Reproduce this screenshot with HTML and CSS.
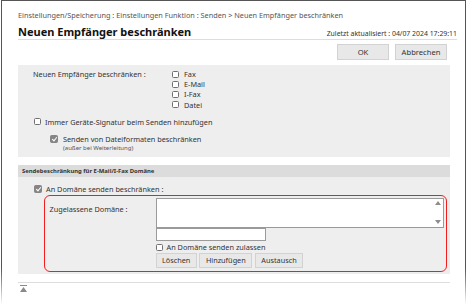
FILE: index.html
```html
<!DOCTYPE html>
<html lang="de">

<head>
    <meta charset="UTF-8">
    <title>Neuen Empfänger beschränken</title>
    <link rel="stylesheet" href="styles.css">
</head>

<body>
    <div class="window">
        <div class="crumb">Einstellungen/Speicherung : Einstellungen Funktion : Senden &gt; Neuen Empfänger beschränken</div>
        <div class="titlebar">
            <h1>Neuen Empfänger beschränken</h1>
            <span class="updated">Zuletzt aktualisiert : 04/07 2024 17:29:11</span>
        </div>
        <div class="actions">
            <button class="btn ok">OK</button>
            <button class="btn">Abbrechen</button>
        </div>

        <div class="panel">
            <div class="dest">
                <span class="dest-label">Neuen Empfänger beschränken :</span>
                <div class="opts">
                    <label class="check"><span class="box"></span>Fax</label>
                    <label class="check"><span class="box"></span>E-Mail</label>
                    <label class="check"><span class="box"></span>I-Fax</label>
                    <label class="check"><span class="box"></span>Datei</label>
                </div>
            </div>
            <label class="check sig"><span class="box"></span>Immer Geräte-Signatur beim Senden hinzufügen</label>
            <div class="fmt">
                <label class="check"><span class="box on"></span>Senden von Dateiformaten beschränken</label>
                <div class="note">(außer bei Weiterleitung)</div>
            </div>
        </div>

        <div class="section">
            <div class="section-head">Sendebeschränkung für E-Mail/I-Fax Domäne</div>
            <div class="section-body">
                <label class="check limit"><span class="box on"></span>An Domäne senden beschränken :</label>
                <div class="domain">
                    <span class="domain-label">Zugelassene Domäne :</span>
                    <div class="controls">
                        <div class="list">
                            <div class="scroll"><span class="up"></span><span class="down"></span></div>
                        </div>
                        <div class="entry"></div>
                        <label class="check allow"><span class="box"></span>An Domäne senden zulassen</label>
                        <div class="btns">
                            <button class="btn small">Löschen</button>
                            <button class="btn small">Hinzufügen</button>
                            <button class="btn small">Austausch</button>
                        </div>
                    </div>
                </div>
            </div>
        </div>

        <div class="footer">
            <svg width="7" height="7" viewBox="0 0 7 7">
                <rect x="0" y="0" width="7" height="1" fill="#8a8a8a" />
                <polygon points="3.5,2 7,7 0,7" fill="#8a8a8a" />
            </svg>
        </div>
    </div>
</body>

</html>
```

FILE: styles.css
```css
* {
    margin: 0;
    padding: 0;
    box-sizing: border-box;
}

body {
    background: #fff;
    font-family: "Noto Sans", "Open Sans", sans-serif;
    font-size: 7.3px;
    color: #333;
}

.window {
    width: 465px;
    height: 304px;
    margin-left: 1px;
    border: 1px solid #555;
    border-bottom: 0;
    border-image: linear-gradient(to bottom, #555 88%, #fff) 1;
    padding: 9px 8px 0 16px;
}

.crumb {
    line-height: 10px;
    color: #555;
    font-size: 7.3px;
}

.titlebar {
    display: flex;
    align-items: baseline;
    justify-content: space-between;
    margin-top: 5px;
    height: 15px;
    border-bottom: 1px solid #ddd;
}

.titlebar h1 {
    font-size: 11px;
    line-height: 14px;
    color: #111;
}

.updated {
    font-size: 6.9px;
    color: #333;
}

.actions {
    display: flex;
    justify-content: flex-end;
    gap: 6px;
    margin-top: 4px;
    margin-right: 10px;
}

.btn {
    height: 16px;
    width: 52px;
    background: #e8e8e8;
    border: 1px solid #d2d2d2;
    font-family: inherit;
    font-size: 7.6px;
    color: #333;
}

.panel {
    margin-top: 5px;
    margin-right: 7px;
    height: 92px;
    background: #eee;
    padding: 4px 0 0 15px;
}

.dest {
    display: flex;
}

.dest-label {
    width: 139px;
    line-height: 10.2px;
}

.opts {
    display: flex;
    flex-direction: column;
}

.check {
    display: flex;
    align-items: center;
    gap: 5px;
    line-height: 10.2px;
}

.box {
    width: 7px;
    height: 7px;
    border: 1px solid #6f6f6f;
    border-radius: 1.5px;
    background: #fff;
    position: relative;
}

.box.on {
    width: 8px;
    height: 8px;
    background: #858585;
    border-color: #858585;
}

.box.on::after {
    content: "";
    position: absolute;
    left: 2px;
    top: 0px;
    width: 2px;
    height: 4px;
    border: solid #fff;
    border-width: 0 1.2px 1.2px 0;
    transform: rotate(40deg);
}

.sig {
    margin-top: 7px;
    margin-left: 1px;
    gap: 4px;
}

.fmt {
    margin-top: 7px;
    margin-left: 17px;
}

.fmt .check {
    gap: 5px;
}

.note {
    font-size: 6px;
    line-height: 9px;
    margin-left: 13px;
    color: #555;
}

.section {
    margin-top: 8px;
    margin-right: 7px;
}

.section-head {
    height: 12px;
    line-height: 12px;
    background: #dcdcdc;
    padding-left: 4px;
    font-weight: bold;
    font-size: 5.9px;
}

.section-body {
    background: #eee;
    height: 97px;
    padding: 7px 3px 0 16px;
}

.limit {
    line-height: 10px;
    gap: 4px;
}

.domain {
    display: flex;
    margin: 1px 0 0 10px;
    border: 1.5px solid #f21d1d;
    border-radius: 6px;
    padding: 1.5px 2.5px 3.5px 4.5px;
}

.domain-label {
    width: 106px;
    padding-top: 6px;
    line-height: 10px;
}

.controls {
    flex: 1;
    display: flex;
    flex-direction: column;
}

.list {
    height: 30px;
    background: #fff;
    border: 1px solid #9a9a9a;
    display: flex;
    justify-content: flex-end;
}

.scroll {
    width: 9px;
    display: flex;
    flex-direction: column;
    justify-content: space-between;
    align-items: center;
    padding: 2px 0 3px;
}

.scroll span {
    width: 0;
    height: 0;
    border-left: 3px solid transparent;
    border-right: 3px solid transparent;
}

.scroll .up {
    border-bottom: 4px solid #8d8d8d;
}

.scroll .down {
    border-top: 4px solid #8d8d8d;
}

.entry {
    width: 110px;
    height: 13px;
    background: #fff;
    border: 1px solid #9a9a9a;
}

.allow {
    margin-top: 1.5px;
    line-height: 10px;
    gap: 4px;
}

.btns {
    display: flex;
    gap: 2.5px;
    margin-top: 0.5px;
}

.btn.small {
    width: auto;
    height: 15px;
    padding: 0 5.5px;
    font-size: 7.3px;
}

.footer {
    margin-top: 8px;
    margin-right: 7px;
    border-top: 1px solid #ddd;
    padding: 2px 0 0 2px;
    line-height: 0;
}
```
